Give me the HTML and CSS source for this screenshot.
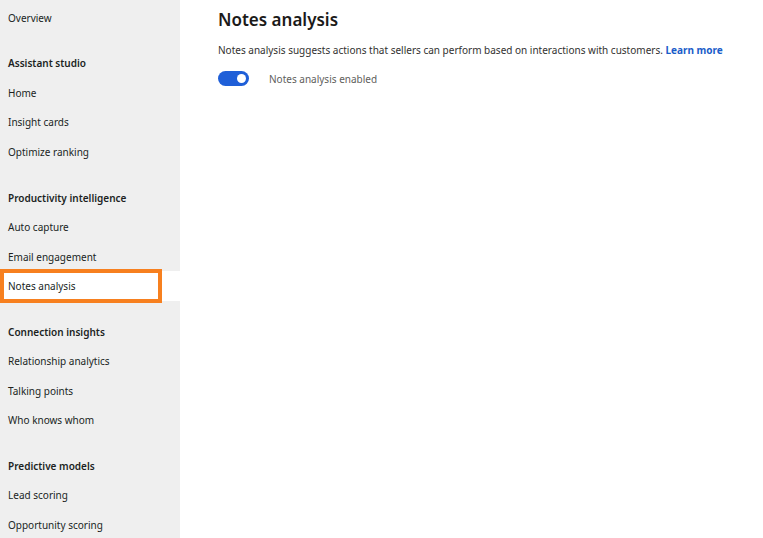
FILE: index.html
```html
<!DOCTYPE html>
<html lang="en">
<head>
<meta charset="utf-8">
<title>Notes analysis</title>
<link rel="stylesheet" href="styles.css">
</head>
<body>
<div class="app">
  <nav class="sidebar">
    <div class="group">
      <div class="item">Overview</div>
    </div>
    <div class="group">
      <div class="item header">Assistant studio</div>
      <div class="item">Home</div>
      <div class="item">Insight cards</div>
      <div class="item">Optimize ranking</div>
    </div>
    <div class="group">
      <div class="item header">Productivity intelligence</div>
      <div class="item">Auto capture</div>
      <div class="item">Email engagement</div>
      <div class="item selected"><span class="highlight">Notes analysis</span></div>
    </div>
    <div class="group">
      <div class="item header">Connection insights</div>
      <div class="item">Relationship analytics</div>
      <div class="item">Talking points</div>
      <div class="item">Who knows whom</div>
    </div>
    <div class="group">
      <div class="item header">Predictive models</div>
      <div class="item">Lead scoring</div>
      <div class="item">Opportunity scoring</div>
    </div>
  </nav>
  <main class="content">
    <h1 class="title">Notes analysis</h1>
    <p class="desc">Notes analysis suggests actions that sellers can perform based on interactions with customers. <a class="link" href="#">Learn more</a></p>
    <div class="toggle-row">
      <span class="toggle"><span class="knob"></span></span>
      <span class="toggle-label">Notes analysis enabled</span>
    </div>
  </main>
</div>
</body>
</html>
```
FILE: styles.css
```css
html, body {
  margin: 0;
  padding: 0;
  background: #ffffff;
}
body {
  font-family: "Noto Sans", "Open Sans", sans-serif;
  color: #201f1e;
  font-size: 10px;
}
.app {
  display: flex;
  min-height: 538px;
}
.sidebar {
  width: 180px;
  flex: none;
  background: #efefef;
  padding-top: 3px;
  box-sizing: border-box;
}
.group + .group {
  margin-top: 16px;
}
.item {
  height: 29.55px;
  display: flex;
  align-items: center;
  padding-left: 8px;
  box-sizing: border-box;
  white-space: nowrap;
}
.header {
  font-weight: 600;
}
.selected {
  background: #ffffff;
  padding-left: 0;
}
.highlight {
  display: flex;
  align-items: center;
  width: 162px;
  height: 34px;
  padding-left: 4px;
  box-sizing: border-box;
  border: 4px solid #f7801f;
  background: #ffffff;
}
.content {
  flex: 1;
  padding-left: 38px;
}
.title {
  margin: 8px 0 0;
  font-size: 17px;
  font-weight: 600;
  line-height: 24px;
  color: #1b1a19;
}
.desc {
  margin: 10px 0 0;
  line-height: 16px;
  color: #323130;
  white-space: nowrap;
}
.link {
  color: #1a5dc9;
  font-weight: 700;
  text-decoration: none;
}
.toggle-row {
  display: flex;
  align-items: center;
  margin-top: 13px;
  gap: 20px;
}
.toggle {
  width: 31px;
  height: 15px;
  border-radius: 8px;
  background: #1f5fd8;
  display: flex;
  align-items: center;
  justify-content: flex-end;
  padding-right: 3px;
  box-sizing: border-box;
}
.knob {
  width: 9px;
  height: 9px;
  border-radius: 50%;
  background: #ffffff;
}
.toggle-label {
  color: #605e5c;
}
```
